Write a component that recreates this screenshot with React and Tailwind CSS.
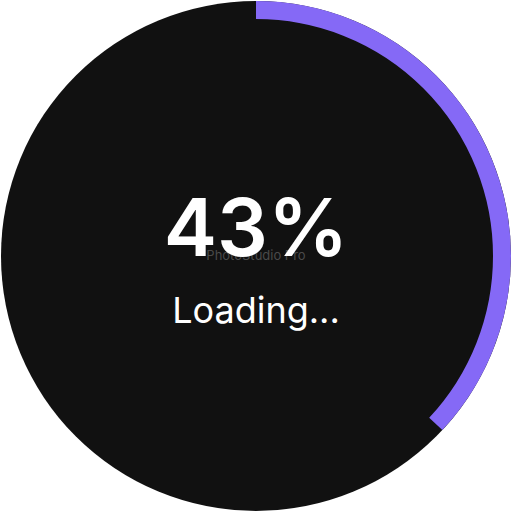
import React from "react";

export default function App() {
  const r = 246;
  const c = 2 * Math.PI * r;
  const arc = (133 / 360) * c;
  return (
    <div className="w-[512px] h-[512px] bg-white flex items-center justify-center">
      <div className="relative w-[510px] h-[510px] rounded-full bg-[#111111] flex items-center justify-center">
        <svg className="absolute inset-0" width="510" height="510" viewBox="0 0 510 510">
          <circle
            cx="255"
            cy="255"
            r={r}
            fill="none"
            stroke="#8569f6"
            strokeWidth="18"
            strokeDasharray={`${arc} ${c}`}
            transform="rotate(-90 255 255)"
          />
        </svg>
        <div
          className="absolute left-0 right-0 top-[245px] text-center text-[13px] text-[#4a4a4a]"
          style={{ fontFamily: "Inter, sans-serif" }}
        >
          PhotoStudio Pro
        </div>
        <div
          className="relative flex flex-col items-center text-white mt-[2px]"
          style={{ fontFamily: "Inter, sans-serif" }}
        >
          <div className="text-[80px] font-semibold leading-none">43%</div>
          <div className="text-[36px] leading-none mt-[25px]">Loading...</div>
        </div>
      </div>
    </div>
  );
}
